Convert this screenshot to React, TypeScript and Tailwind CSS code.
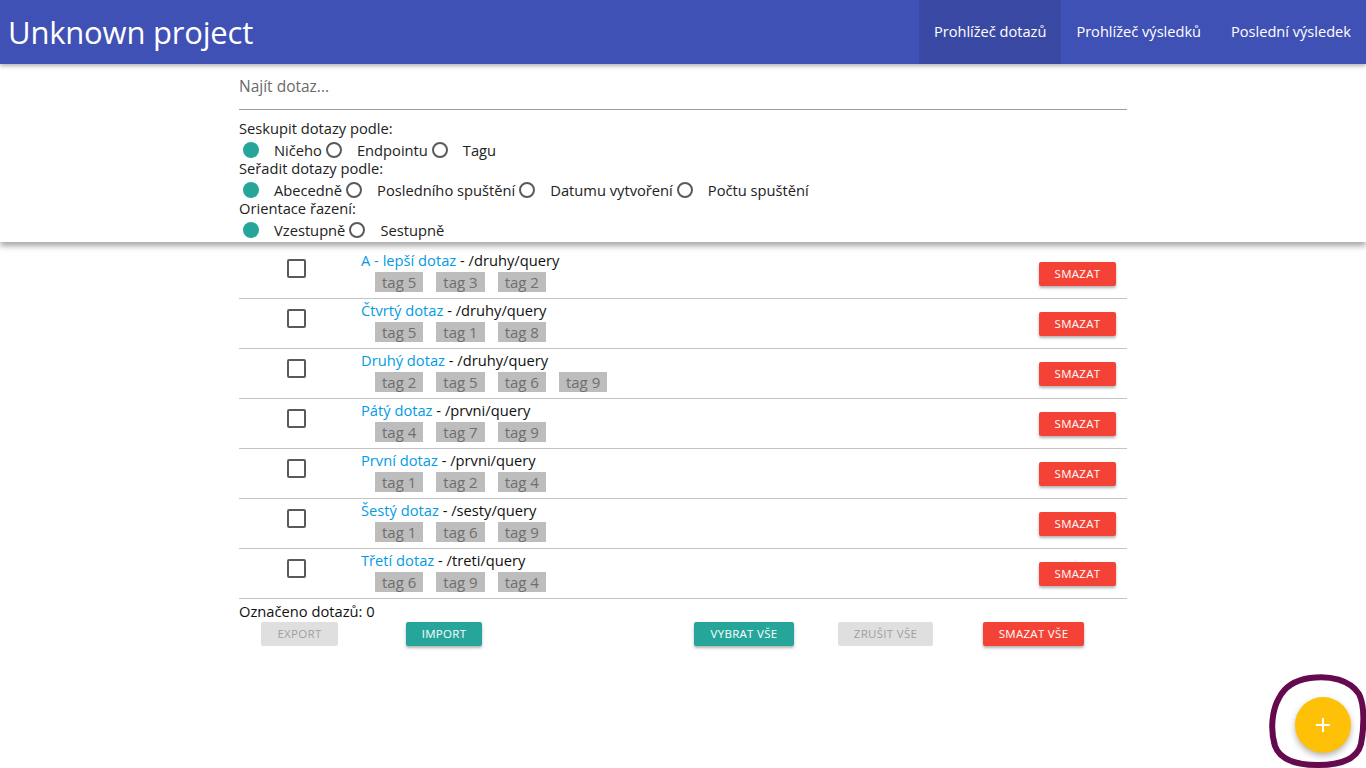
import React, { useState } from 'react';

type Query = {
  name: string;
  endpoint: string;
  tags: string[];
};

const queries: Query[] = [
  { name: 'A - lepší dotaz', endpoint: '/druhy/query', tags: ['tag 5', 'tag 3', 'tag 2'] },
  { name: 'Čtvrtý dotaz', endpoint: '/druhy/query', tags: ['tag 5', 'tag 1', 'tag 8'] },
  { name: 'Druhý dotaz', endpoint: '/druhy/query', tags: ['tag 2', 'tag 5', 'tag 6', 'tag 9'] },
  { name: 'Pátý dotaz', endpoint: '/prvni/query', tags: ['tag 4', 'tag 7', 'tag 9'] },
  { name: 'První dotaz', endpoint: '/prvni/query', tags: ['tag 1', 'tag 2', 'tag 4'] },
  { name: 'Šestý dotaz', endpoint: '/sesty/query', tags: ['tag 1', 'tag 6', 'tag 9'] },
  { name: 'Třetí dotaz', endpoint: '/treti/query', tags: ['tag 6', 'tag 9', 'tag 4'] },
];

const font = { fontFamily: '"Open Sans", "Noto Sans", sans-serif' };

const RadioGroup: React.FC<{ options: string[] }> = ({ options }) => {
  const [selected, setSelected] = useState(0);
  return (
    <div className="flex items-center h-[22px] pt-[4px] pl-[4px]">
      {options.map((opt, i) => (
        <label
          key={opt}
          className="flex items-center cursor-pointer mr-[4px]"
          onClick={() => setSelected(i)}
        >
          {selected === i ? (
            <span className="w-[16px] h-[16px] rounded-full bg-[#26a69a]" />
          ) : (
            <span className="w-[16px] h-[16px] rounded-full border-2 border-[#5a5a5a]" />
          )}
          <span className="ml-[15px] text-[14.7px] text-[#222]">{opt}</span>
        </label>
      ))}
    </div>
  );
};

const Btn: React.FC<{ label: string; kind: 'teal' | 'red' | 'off'; className?: string }> = ({
  label,
  kind,
  className = '',
}) => {
  const styles =
    kind === 'teal'
      ? 'bg-[#26a69a] text-white shadow-[0_2px_3px_rgba(0,0,0,0.3)]'
      : kind === 'red'
      ? 'bg-[#f44336] text-white shadow-[0_2px_3px_rgba(0,0,0,0.3)]'
      : 'bg-[#dfdfdf] text-[#9f9f9f]';
  return (
    <button
      className={`h-[24px] rounded-[2px] text-[11.5px] uppercase tracking-[0.3px] flex items-center justify-center ${styles} ${className}`}
    >
      {label}
    </button>
  );
};

export default function App() {
  const [checked, setChecked] = useState<boolean[]>(queries.map(() => false));
  const count = checked.filter(Boolean).length;

  return (
    <div className="min-h-[768px] bg-white relative overflow-hidden" style={font}>
      <nav className="h-[64px] bg-[#3f51b5] flex items-stretch justify-between shadow-[0_2px_4px_rgba(0,0,0,0.3)] relative z-20">
        <div className="pl-[8px] flex items-center text-white text-[31px] tracking-[-0.2px]">
          Unknown project
        </div>
        <ul className="flex items-stretch text-white text-[14.6px]">
          <li className="px-[15px] flex items-center bg-[#3949a3]">Prohlížeč dotazů</li>
          <li className="px-[15px] flex items-center">Prohlížeč výsledků</li>
          <li className="px-[15px] flex items-center">Poslední výsledek</li>
        </ul>
      </nav>

      <div className="bg-white shadow-[0_4px_6px_rgba(0,0,0,0.35)] relative z-10 h-[178px]">
        <div className="w-[888px] ml-[239px]">
          <div className="h-[46px] border-b border-[#9e9e9e] flex items-end pb-[11px]">
            <input
              placeholder="Najít dotaz..."
              className="w-full outline-none text-[15.5px] placeholder-[#6b6b6b] bg-transparent"
            />
          </div>
          <div className="pt-[9px] text-[14.7px] text-[#222]">
            <div className="h-[18px] leading-[18px]">Seskupit dotazy podle:</div>
            <RadioGroup options={['Ničeho', 'Endpointu', 'Tagu']} />
            <div className="h-[18px] leading-[18px]">Seřadit dotazy podle:</div>
            <RadioGroup
              options={['Abecedně', 'Posledního spuštění', 'Datumu vytvoření', 'Počtu spuštění']}
            />
            <div className="h-[18px] leading-[18px]">Orientace řazení:</div>
            <RadioGroup options={['Vzestupně', 'Sestupně']} />
          </div>
        </div>
      </div>

      <div className="w-[888px] ml-[239px] pt-[7px]">
        {queries.map((q, i) => (
          <div key={q.name} className="h-[50px] border-b border-[#c4c4c4] flex items-start">
            <div className="w-[122px] flex pl-[48px] pt-[10px]">
              <button
                onClick={() =>
                  setChecked((c) => c.map((v, j) => (j === i ? !v : v)))
                }
                className={`w-[19px] h-[19px] rounded-[2px] border-2 ${
                  checked[i] ? 'bg-[#26a69a] border-[#26a69a]' : 'border-[#5a5a5a]'
                }`}
              />
            </div>
            <div className="flex-1 pt-[1px]">
              <div className="text-[14.7px] leading-[20px] text-[#111]">
                <span className="text-[#039be5]">{q.name}</span> - {q.endpoint}
              </div>
              <div className="flex gap-[13px] pl-[14px] mt-[2px]">
                {q.tags.map((t) => (
                  <span
                    key={t}
                    className="h-[20px] px-[7px] bg-[#bdbdbd] text-[#6f6f6f] text-[15px] leading-[20px]"
                  >
                    {t}
                  </span>
                ))}
              </div>
            </div>
            <div className="pt-[13px] pr-[11px]">
              <Btn label="Smazat" kind="red" className="w-[77px]" />
            </div>
          </div>
        ))}
        <div className="text-[14.7px] text-[#111] pt-[2px] leading-[20px]">
          Označeno dotazů: {count}
        </div>
        <div className="flex mt-[1px]">
          <Btn label="Export" kind="off" className="w-[77px] ml-[22px]" />
          <Btn label="Import" kind="teal" className="w-[76px] ml-[68px]" />
          <Btn label="Vybrat vše" kind="teal" className="w-[100px] ml-[212px]" />
          <Btn label="Zrušit vše" kind="off" className="w-[95px] ml-[44px]" />
          <Btn label="Smazat vše" kind="red" className="w-[101px] ml-[50px]" />
        </div>
      </div>

      <button className="absolute left-[1295px] top-[697px] w-[56px] h-[56px] rounded-full bg-[#ffc107] shadow-[0_3px_6px_rgba(0,0,0,0.3)] flex items-center justify-center">
        <svg width="18" height="18" viewBox="0 0 18 18">
          <path d="M9 2v14M2 9h14" stroke="white" strokeWidth="2" />
        </svg>
      </button>
      <svg
        className="absolute left-[1268px] top-[672px] pointer-events-none"
        width="98"
        height="96"
        viewBox="0 0 98 96"
      >
        <path
          d="M42 6 C62 3 82 8 91 22 C97 34 96 56 93 72 C89 88 70 93 50 93 C30 93 12 88 7 74 C2 58 4 38 11 26 C17 14 28 8 42 6 Z"
          fill="none"
          stroke="#650a4e"
          strokeWidth="6"
        />
      </svg>
    </div>
  );
}
